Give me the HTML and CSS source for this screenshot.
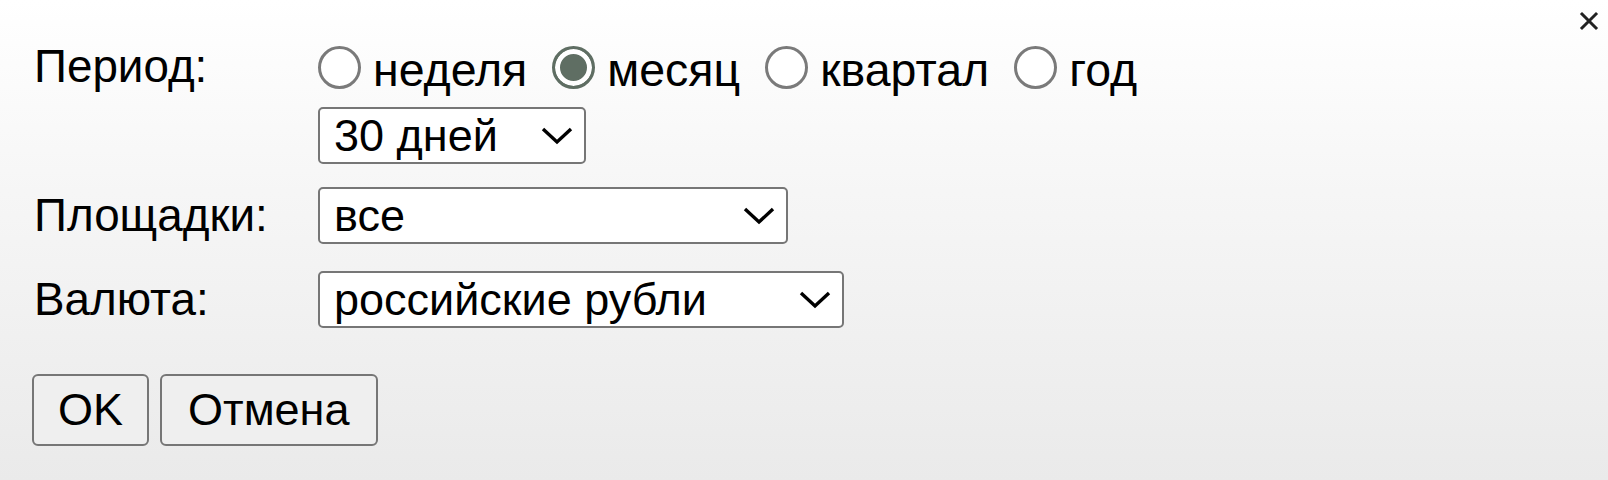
FILE: index.html
```html
<!DOCTYPE html>
<html lang="ru">
<head>
<meta charset="utf-8">
<title>Параметры</title>
<link rel="stylesheet" href="styles.css">
</head>
<body>
<div class="dialog">
  <button class="close" type="button" aria-label="Закрыть">
    <svg width="20" height="20" viewBox="0 0 20 20"><path d="M3 3 L17 17 M17 3 L3 17" stroke="#222" stroke-width="3" stroke-linecap="square"/></svg>
  </button>
  <div class="form">
    <div class="label label-top">Период:</div>
    <div class="control">
      <div class="radios">
        <label class="opt"><input type="radio" name="p" class="radio"><span class="opt-text">неделя</span></label>
        <label class="opt"><input type="radio" name="p" class="radio" checked><span class="opt-text">месяц</span></label>
        <label class="opt"><input type="radio" name="p" class="radio"><span class="opt-text">квартал</span></label>
        <label class="opt"><input type="radio" name="p" class="radio"><span class="opt-text">год</span></label>
      </div>
      <div class="sel-wrap sel-days">
        <select class="sel"><option>30 дней</option></select>
        <svg class="chev" width="32" height="18" viewBox="0 0 32 18"><path d="M2 2 L16 15 L30 2" fill="none" stroke="#000" stroke-width="3.4"/></svg>
      </div>
    </div>

    <div class="label">Площадки:</div>
    <div class="control">
      <div class="sel-wrap sel-sites">
        <select class="sel"><option>все</option></select>
        <svg class="chev" width="32" height="18" viewBox="0 0 32 18"><path d="M2 2 L16 15 L30 2" fill="none" stroke="#000" stroke-width="3.4"/></svg>
      </div>
    </div>

    <div class="label">Валюта:</div>
    <div class="control">
      <div class="sel-wrap sel-cur">
        <select class="sel"><option>российские рубли</option></select>
        <svg class="chev" width="32" height="18" viewBox="0 0 32 18"><path d="M2 2 L16 15 L30 2" fill="none" stroke="#000" stroke-width="3.4"/></svg>
      </div>
    </div>
  </div>
  <div class="buttons">
    <button class="btn" type="button">OK</button>
    <button class="btn btn-wide" type="button">Отмена</button>
  </div>
</div>
</body>
</html>
```

FILE: styles.css
```css
html, body {
  margin: 0;
  padding: 0;
}
body {
  width: 1608px;
  height: 480px;
  background: linear-gradient(to bottom, #ffffff 0%, #f6f6f6 40%, #eaeaea 100%);
  font-family: "Liberation Sans", Arial, sans-serif;
  font-size: 45px;
  color: #000;
  overflow: hidden;
}
.dialog {
  position: relative;
  height: 480px;
  box-sizing: border-box;
  padding: 41px 0 0 32px;
}
.close {
  position: absolute;
  top: 11px;
  right: 9px;
  width: 20px;
  height: 20px;
  padding: 0;
  border: 0;
  background: transparent;
  display: flex;
}
.form {
  display: grid;
  grid-template-columns: 286px auto;
  align-items: center;
}
.form > :nth-child(n+3) {
  margin-top: 23px;
}
.form > :nth-child(n+5) {
  margin-top: 27px;
}
.label {
  line-height: 52px;
  font-size: 45.8px;
  padding-left: 2px;
}
.label-top {
  align-self: start;
}
.control {
  display: flex;
  flex-direction: column;
  align-items: flex-start;
  gap: 14px;
}
.radios {
  display: flex;
  align-items: center;
  height: 52px;
}
.opt {
  display: flex;
  align-items: center;
  margin-right: 25px;
  line-height: 52px;
}
.opt-text {
  font-size: 46.5px;
  padding-top: 6px;
}
.radio {
  appearance: none;
  -webkit-appearance: none;
  margin: 1px 12px 0 0;
  width: 43px;
  height: 43px;
  box-sizing: border-box;
  border: 3px solid #7a7a7a;
  border-radius: 50%;
  background: #fff;
}
.radio:checked {
  border-color: #5f6e63;
  background: #5f6e63;
  box-shadow: inset 0 0 0 5px #fff;
}
.sel-wrap {
  position: relative;
  display: flex;
}
.sel {
  appearance: none;
  -webkit-appearance: none;
  height: 57px;
  box-sizing: border-box;
  border: 2px solid #767676;
  border-radius: 5px;
  background: #fff;
  font-family: "Liberation Sans", Arial, sans-serif;
  font-size: 45px;
  color: #000;
  padding: 0 0 0 14px;
  margin: 0;
}
.sel-days .sel { width: 268px; }
.sel-sites .sel { width: 470px; }
.sel-cur .sel { width: 526px; }
.chev {
  position: absolute;
  right: 13px;
  top: 20px;
  pointer-events: none;
}
.buttons {
  display: flex;
  gap: 11px;
  margin-top: 46px;
}
.btn {
  height: 72px;
  box-sizing: border-box;
  border: 2px solid #767676;
  border-radius: 6px;
  background: #efefef;
  font-family: "Liberation Sans", Arial, sans-serif;
  font-size: 45px;
  color: #000;
  padding: 0 24px;
  margin: 0;
}
.btn-wide {
  padding: 0 26px;
}
```
